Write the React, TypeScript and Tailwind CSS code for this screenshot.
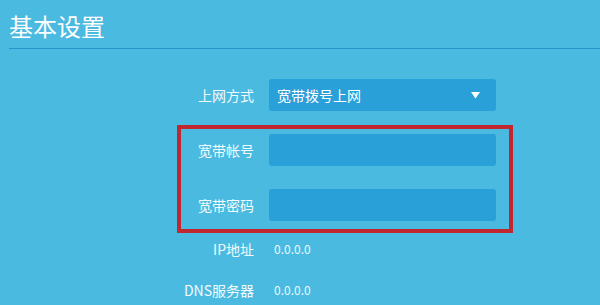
const font = { fontFamily: '"Microsoft YaHei", "Noto Sans CJK SC", "Liberation Sans", sans-serif' };

const Label = ({ text }: { text: string }) => (
    <div className="w-[73px] shrink-0 text-right text-[14px] text-[#f2fafd] whitespace-nowrap">{text}</div>
);

const Field = ({ children }: { children?: React.ReactNode }) => (
    <div className="ml-[15px] flex h-[32px] w-[227px] items-center rounded-[3px] bg-[#2aa0d9] px-[8px] text-[14px] text-white">
        {children}
    </div>
);

export default function App() {
    return (
        <div className="h-[305px] w-[600px] overflow-hidden bg-[#4bbae0]" style={font}>
            <div className="pl-[9px] pt-[11px]">
                <h1 className="text-[24px] leading-[30px] text-white">基本设置</h1>
                <div className="mt-[7px] h-px bg-[#2a92cc]" />
            </div>

            <div className="ml-[181px] mt-[30px]">
                <div className="flex items-center">
                    <Label text="上网方式" />
                    <Field>
                        <span className="flex-1">宽带拨号上网</span>
                        <svg width="9" height="7" viewBox="0 0 9 7" className="mr-[8px]">
                            <polygon points="0,0 9,0 4.5,6.5" fill="#ffffff" />
                        </svg>
                    </Field>
                </div>

                <div className="-ml-[4px] mt-[14px] w-[336px] border-[4px] border-[#c1272f] pb-[8px] pt-[5px]">
                    <div className="flex items-center">
                        <Label text="宽带帐号" />
                        <Field />
                    </div>
                    <div className="mt-[23px] flex items-center">
                        <Label text="宽带密码" />
                        <Field />
                    </div>
                </div>

                <div className="flex h-[32px] items-center">
                    <Label text="IP地址" />
                    <div className="ml-[20px] text-[12px] text-[#eef8fc]">0.0.0.0</div>
                </div>
                <div className="mt-[9px] flex h-[32px] items-center">
                    <Label text="DNS服务器" />
                    <div className="ml-[20px] text-[12px] text-[#eef8fc]">0.0.0.0</div>
                </div>
            </div>
        </div>
    );
}
